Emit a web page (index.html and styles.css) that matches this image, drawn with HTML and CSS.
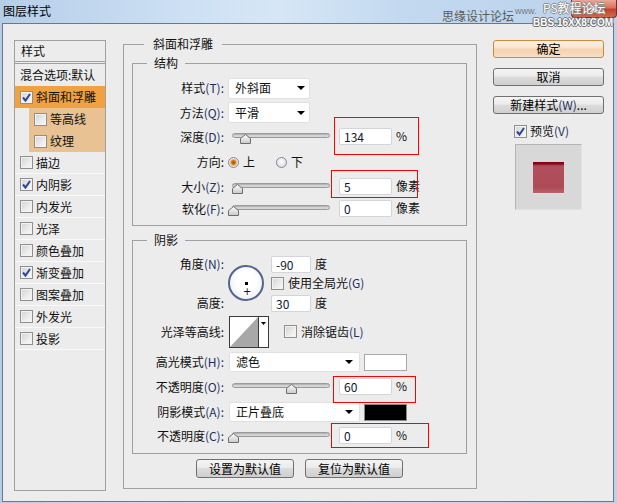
FILE: index.html
```html
<!DOCTYPE html>
<html lang="zh-CN">
<head>
<meta charset="utf-8">
<title>图层样式</title>
<link rel="stylesheet" href="styles.css">
</head>
<body>
<div class="window">
  <div class="titlebar">
    <span class="title">图层样式</span>
    <span class="close"><svg width="12" height="10" viewBox="0 0 12 10"><path d="M2 1 L10 9 M10 1 L2 9" stroke="#fff" stroke-width="2.4"/></svg></span>
  </div>
  <div class="wm wm1">思缘设计论坛</div>
  <div class="wm wm2">www.</div>
  <div class="wm wm3">PS教程论坛</div>
  <div class="wm wm4">BBS.16XX8.COM</div>

  <div class="client">
    <div class="stylelist">
      <div class="li head">样式</div>
      <div class="li plain">混合选项:默认</div>
      <div class="li sel"><span class="cb on"><svg width="11" height="11" viewBox="0 0 11 11"><path d="M2 5.5 L4.5 8.5 L9 2" fill="none" stroke="#2d4596" stroke-width="2"/></svg></span>斜面和浮雕</div>
      <div class="li sub"><span class="cb"></span>等高线</div>
      <div class="li sub"><span class="cb"></span>纹理</div>
      <div class="li"><span class="cb"></span>描边</div>
      <div class="li"><span class="cb on"><svg width="11" height="11" viewBox="0 0 11 11"><path d="M2 5.5 L4.5 8.5 L9 2" fill="none" stroke="#2d4596" stroke-width="2"/></svg></span>内阴影</div>
      <div class="li"><span class="cb"></span>内发光</div>
      <div class="li"><span class="cb"></span>光泽</div>
      <div class="li"><span class="cb"></span>颜色叠加</div>
      <div class="li"><span class="cb on"><svg width="11" height="11" viewBox="0 0 11 11"><path d="M2 5.5 L4.5 8.5 L9 2" fill="none" stroke="#2d4596" stroke-width="2"/></svg></span>渐变叠加</div>
      <div class="li"><span class="cb"></span>图案叠加</div>
      <div class="li"><span class="cb"></span>外发光</div>
      <div class="li"><span class="cb"></span>投影</div>
    </div>

    <div class="group outer">
      <div class="gtitle">斜面和浮雕</div>

      <div class="group inner struct">
        <div class="gtitle">结构</div>
        <div class="row h24"><span class="lbl">样式<span class="k">(T):</span></span><div class="select s1"><span>外斜面</span><i class="arr"></i></div></div>
        <div class="row h25"><span class="lbl">方法<span class="k">(Q):</span></span><div class="select s1"><span>平滑</span><i class="arr"></i></div></div>
        <div class="row h24"><span class="lbl">深度<span class="k">(D):</span></span>
          <div class="slider"><div class="track"></div><div class="thumb" style="left:12px"><svg width="11" height="10" viewBox="0 0 11 10"><defs><linearGradient id="tg1" x1="0" y1="0" x2="0" y2="1"><stop offset="0" stop-color="#ffffff"/><stop offset="1" stop-color="#c8c8c8"/></linearGradient></defs><polygon points="0.5,4.5 5.5,0.5 10.5,4.5 10.5,9.5 0.5,9.5" fill="url(#tg1)" stroke="#6e6e6e"/></svg></div></div>
          <span class="mark"><span class="field">134</span><span class="unit">%</span><span class="redbox m1"></span></span>
        </div>
        <div class="row h26"><span class="lbl">方向:</span><span class="radio on"></span><span class="rtext">上</span><span class="radio r2"></span><span class="rtext">下</span></div>
        <div class="row h24"><span class="lbl">大小<span class="k">(Z):</span></span>
          <div class="slider"><div class="track"></div><div class="thumb" style="left:4px"><svg width="11" height="10" viewBox="0 0 11 10"><polygon points="0.5,4.5 5.5,0.5 10.5,4.5 10.5,9.5 0.5,9.5" fill="url(#tg1)" stroke="#6e6e6e"/></svg></div></div>
          <span class="mark"><span class="field">5</span><span class="unit">像素</span><span class="redbox m2"></span></span>
        </div>
        <div class="row h20"><span class="lbl">软化<span class="k">(F):</span></span>
          <div class="slider"><div class="track"></div><div class="thumb" style="left:0px"><svg width="11" height="10" viewBox="0 0 11 10"><polygon points="0.5,4.5 5.5,0.5 10.5,4.5 10.5,9.5 0.5,9.5" fill="url(#tg1)" stroke="#6e6e6e"/></svg></div></div>
          <span class="mark"><span class="field">0</span><span class="unit">像素</span></span>
        </div>
      </div>

      <div class="group inner shadow">
        <div class="gtitle">阴影</div>
        <div class="angle">
          <div class="alabels"><span class="lbl">角度<span class="k">(N):</span></span><span class="lbl">高度:</span></div>
          <div class="dial"><span class="dot"></span><span class="cursor">+</span></div>
          <div class="acol">
            <div class="arow a1"><span class="field f40">-90</span><span class="unit">度</span></div>
            <div class="arow a2"><span class="cb"></span><span>使用全局光<span class="k">(G)</span></span></div>
            <div class="arow a3"><span class="field f40">30</span><span class="unit">度</span></div>
          </div>
        </div>
        <div class="row h35"><span class="lbl">光泽等高线:</span>
          <div class="contour"><svg width="40" height="32" viewBox="0 0 40 32"><rect x="0.5" y="0.5" width="39" height="31" fill="#fff" stroke="#3a3a3a"/><polygon points="1,31 29,1 29,31" fill="#a8a8a8"/><line x1="29.5" y1="1" x2="29.5" y2="31" stroke="#3a3a3a"/><polygon points="32,6 37,6 34.5,9" fill="#000"/></svg></div>
          <span class="cb c2"></span><span>消除锯齿<span class="k">(L)</span></span>
        </div>
        <div class="row h26"><span class="lbl">高光模式<span class="k">(H):</span></span><div class="select s2"><span>滤色</span><i class="arr"></i></div><span class="color white"></span></div>
        <div class="row h24"><span class="lbl">不透明度<span class="k">(O):</span></span>
          <div class="slider"><div class="track"></div><div class="thumb" style="left:58px"><svg width="11" height="10" viewBox="0 0 11 10"><polygon points="0.5,4.5 5.5,0.5 10.5,4.5 10.5,9.5 0.5,9.5" fill="url(#tg1)" stroke="#6e6e6e"/></svg></div></div>
          <span class="mark"><span class="field">60</span><span class="unit">%</span><span class="redbox m3"></span></span>
        </div>
        <div class="row h26"><span class="lbl">阴影模式<span class="k">(A):</span></span><div class="select s2"><span>正片叠底</span><i class="arr"></i></div><span class="color black"></span></div>
        <div class="row h22"><span class="lbl">不透明度<span class="k">(C):</span></span>
          <div class="slider"><div class="track"></div><div class="thumb" style="left:0px"><svg width="11" height="10" viewBox="0 0 11 10"><polygon points="0.5,4.5 5.5,0.5 10.5,4.5 10.5,9.5 0.5,9.5" fill="url(#tg1)" stroke="#6e6e6e"/></svg></div></div>
          <span class="mark"><span class="field">0</span><span class="unit">%</span><span class="redbox m4"></span></span>
        </div>
      </div>

      <div class="btnrow">
        <button class="btn b2">设置为默认值</button>
        <button class="btn b2">复位为默认值</button>
      </div>
    </div>

    <div class="side">
      <button class="btn default">确定</button>
      <button class="btn">取消</button>
      <button class="btn">新建样式<span class="k">(W)</span>...</button>
      <div class="prevrow"><span class="cb on"><svg width="11" height="11" viewBox="0 0 11 11"><path d="M2 5.5 L4.5 8.5 L9 2" fill="none" stroke="#2d4596" stroke-width="2"/></svg></span>预览<span class="k">(V)</span></div>
      <div class="preview"><div class="redsq"></div></div>
    </div>
  </div>
</div>
</body>
</html>
```

FILE: styles.css
```css
html, body {
  margin: 0;
  padding: 0;
}
body {
  width: 617px;
  height: 503px;
  overflow: hidden;
  font-family: "Noto Sans CJK SC", "Microsoft YaHei", sans-serif;
  font-size: 12px;
  color: #111;
}
.window {
  position: relative;
  width: 617px;
  height: 503px;
  display: flex;
  flex-direction: column;
  background: linear-gradient(90deg, #b5cee8 0%, #cde0f4 30%, #d6e6f6 45%, #c3d9f0 65%, #bad2ec 100%);
}
.titlebar {
  height: 23px;
  flex: none;
  display: flex;
  align-items: flex-start;
}
.title {
  margin: 3px 0 0 3px;
  line-height: 16px;
  font-size: 12px;
  color: #000;
}
.close {
  margin-left: auto;
  width: 46px;
  height: 18px;
  box-sizing: border-box;
  border: 1px solid #7a2c20;
  border-top: 0;
  border-radius: 0 0 4px 4px;
  background: linear-gradient(#e9a797 0%, #d9735f 45%, #c2402a 55%, #d06a50 100%);
  display: flex;
  align-items: center;
  justify-content: center;
}
.wm {
  position: absolute;
  white-space: nowrap;
}
.wm1 { left: 442px; top: 9px; line-height: 14px; color: #5a5a5a; font-size: 12px; }
.wm2 { left: 515px; top: 6px; line-height: 10px; color: #7a7a7a; font-size: 9px; font-family: "Liberation Sans", sans-serif; }
.wm3 { left: 543px; top: 1px; line-height: 14px; color: #fff; font-size: 12px; text-shadow: 1px 0 0 #8a8a8a, -1px 0 0 #8a8a8a, 0 1px 0 #8a8a8a, 0 -1px 0 #8a8a8a; }
.wm4 { left: 533px; top: 17px; line-height: 11px; color: #fff; font-size: 10px; font-family: "Liberation Sans", sans-serif; font-weight: bold; text-shadow: 1px 0 0 #707070, -1px 0 0 #707070, 0 1px 0 #707070, 0 -1px 0 #707070; }

.client {
  flex: 1;
  margin: 0 3px 1px 2px;
  border: 1px solid #6c7887;
  background: #ececec;
  display: flex;
  align-items: flex-start;
  padding: 16px 0 0 11px;
}

/* left style list */
.stylelist {
  width: 92px;
  height: 451px;
  box-sizing: border-box;
  border: 1px solid #a0a0a0;
  flex: none;
}
.li {
  height: 21px;
  border-bottom: 1px solid #f9f9f9;
  display: flex;
  align-items: center;
  padding-left: 5px;
  line-height: 16px;
  white-space: nowrap;
}
.li.head {
  height: 20px;
  border-bottom: 3px double #a0a0a0;
  padding-left: 6px;
}
.li.plain {
  height: 22px;
  border-bottom: 0;
}
.li.sel {
  height: 22px;
  border-bottom: 0;
  background: #f0a142;
}
.li.sub {
  height: 22px;
  border-bottom: 0;
  margin-left: 14px;
  background: #e8c293;
}
.cb {
  width: 13px;
  height: 13px;
  box-sizing: border-box;
  border: 1px solid #8f8f8f;
  background: linear-gradient(135deg, #d2d2d2 0%, #ececec 60%, #fafafa 100%);
  box-shadow: inset 0 0 0 1px #f2f2f2;
  margin-right: 3px;
  flex: none;
  display: flex;
  align-items: center;
  justify-content: center;
}
.cb svg { display: block; }

/* group boxes */
.group {
  border: 1px solid #a0a0a0;
  box-sizing: border-box;
}
.gtitle {
  width: fit-content;
  height: 16px;
  line-height: 16px;
  background: #ececec;
  white-space: nowrap;
}
.outer {
  margin: 4px 0 0 17px;
  width: 354px;
  height: 445px;
  padding: 0 9px 0 8px;
  flex: none;
}
.outer > .gtitle {
  margin: -9px 0 0 12px;
  padding: 0 9px;
}
.inner > .gtitle {
  margin: -9px 0 0 14px;
  padding: 0 7px;
}
.struct {
  margin-top: 11px;
  padding-bottom: 6px;
}
.struct > .gtitle + .row { margin-top: 5px; }
.shadow {
  margin-top: 14px;
  padding-bottom: 6px;
}

.row {
  display: flex;
  align-items: center;
  white-space: nowrap;
}
.h20 { height: 20px; }
.h22 { height: 22px; }
.h24 { height: 24px; }
.h25 { height: 25px; }
.h26 { height: 26px; }
.h35 { height: 35px; }
.lbl {
  width: 91px;
  flex: none;
  text-align: right;
  line-height: 16px;
}
.k { color: #1f2f5f; }

.select {
  height: 21px;
  box-sizing: border-box;
  background: #fff;
  border: 1px solid #e0e0e0;
  border-radius: 2px;
  margin-left: 4px;
  padding: 0 4px 0 6px;
  display: flex;
  align-items: center;
  justify-content: space-between;
  line-height: 16px;
  flex: none;
}
.s1 { width: 82px; }
.s2 { width: 131px; height: 20px; margin-left: 5px; padding-right: 6px; }
.arr {
  width: 0;
  height: 0;
  border-left: 4px solid transparent;
  border-right: 4px solid transparent;
  border-top: 4px solid #000;
}

.slider {
  position: relative;
  width: 104px;
  height: 12px;
  margin: 4px 0 0 4px;
  flex: none;
}
.track {
  position: absolute;
  left: 4px;
  top: 0;
  width: 98px;
  height: 5px;
  box-sizing: border-box;
  border-radius: 3px;
  border: 1px solid #9a9a9a;
  background: linear-gradient(#a9a9a9, #e2e2e2 70%, #c4c4c4);
}
.thumb {
  position: absolute;
  top: 1px;
  width: 11px;
  height: 10px;
}
.thumb svg { display: block; }

.mark {
  position: relative;
  display: flex;
  align-items: flex-start;
  height: 18px;
  margin-left: 7px;
}
.field {
  width: 53px;
  height: 17px;
  box-sizing: border-box;
  border: 1px solid #d2d6dc;
  border-radius: 2px;
  background: #fff;
  padding-left: 4px;
  line-height: 15px;
  color: #101830;
  flex: none;
}
.f40 { width: 40px; }
.unit { margin-left: 4px; line-height: 16px; }
.redbox {
  position: absolute;
  box-sizing: border-box;
  border: 1px solid #ff0000;
  pointer-events: none;
}
.m1 { left: -5px; top: -11px; width: 85px; height: 38px; }
.m2 { left: -8px; top: -8px; width: 87px; height: 28px; }
.m3 { left: -6px; top: -2px; width: 83px; height: 27px; }
.m4 { left: -8px; top: -4px; width: 98px; height: 25px; }

.radio {
  width: 11px;
  height: 11px;
  box-sizing: border-box;
  border-radius: 50%;
  border: 1px solid #7c8796;
  background: radial-gradient(circle at 50% 40%, #ffffff, #d4d4d4);
  margin-left: 4px;
  flex: none;
}
.radio.on {
  background: radial-gradient(circle, #a24a08 0, #d77a1c 2px, #f2b46a 3px, #e8e8e8 4px, #fafafa 5px);
}
.radio.r2 { margin-left: 21px; }
.rtext { margin-left: 4px; line-height: 16px; }

/* angle block */
.angle {
  display: flex;
  height: 60px;
  margin-top: 6px;
}
.alabels {
  display: flex;
  flex-direction: column;
  justify-content: space-between;
  padding: 2px 0 3px;
}
.dial {
  position: relative;
  width: 36px;
  height: 36px;
  box-sizing: border-box;
  margin: 11px 0 0 4px;
  border-radius: 50%;
  border: 2px solid #56648c;
  background: radial-gradient(circle at 50% 45%, #ffffff 40%, #e4e6ee 100%);
  display: flex;
  align-items: center;
  justify-content: center;
  flex: none;
}
.dot {
  width: 3px;
  height: 3px;
  background: #000;
}
.cursor {
  position: absolute;
  left: 13px;
  top: 20px;
  font-size: 10px;
  line-height: 10px;
  font-family: "DejaVu Sans", sans-serif;
  color: #111;
}
.acol {
  margin-left: 7px;
  display: flex;
  flex-direction: column;
}
.arow {
  display: flex;
  align-items: center;
  line-height: 16px;
  white-space: nowrap;
}
.a1 { height: 20px; }
.a2 { height: 18px; }
.a3 { height: 22px; }
.a2 .cb { margin-right: 4px; }

.contour {
  width: 40px;
  height: 32px;
  margin-left: 5px;
  flex: none;
}
.contour svg { display: block; }
.cb.c2 { margin-left: 15px; margin-right: 4px; }

.color {
  margin-left: 4px;
  width: 43px;
  height: 17px;
  box-sizing: border-box;
  flex: none;
}
.color.white { background: #fff; border: 1px solid #a8a8a8; }
.color.black { background: #000; border: 1px solid #8a8a8a; }

/* buttons */
.btn {
  display: block;
  height: 18px;
  width: 111px;
  box-sizing: border-box;
  padding: 0;
  border: 1px solid #707070;
  border-radius: 3px;
  background: linear-gradient(#f4f4f4 0%, #ebebeb 45%, #dcdcdc 50%, #cfcfcf 100%);
  font-family: "Noto Sans CJK SC", "Microsoft YaHei", sans-serif;
  font-size: 12px;
  line-height: 16px;
  color: #000;
  text-align: center;
  white-space: nowrap;
}
.btn.default {
  border-color: #d1883a;
  background: linear-gradient(#fdf2e6 0%, #f9e2cc 45%, #f4d2ae 50%, #f7dfc4 100%);
}
.btnrow {
  display: flex;
  justify-content: center;
  gap: 11px;
  margin-top: 5px;
}
.btn.b2 {
  width: 98px;
  height: 19px;
  line-height: 17px;
}

.side {
  margin-left: 16px;
  width: 111px;
  flex: none;
  display: flex;
  flex-direction: column;
  gap: 10px;
}
.prevrow {
  margin-top: 1px;
  padding-left: 21px;
  display: flex;
  align-items: center;
  height: 12px;
  line-height: 16px;
  white-space: nowrap;
}
.preview {
  margin: -3px 0 0 22px;
  width: 67px;
  height: 66px;
  box-sizing: border-box;
  border: 1px solid #b5b5b5;
  border-right-color: #e2e2e2;
  border-bottom-color: #e2e2e2;
  background: #d8d8d8;
  display: flex;
  align-items: center;
  justify-content: center;
}
.redsq {
  width: 31px;
  height: 31px;
  background: linear-gradient(#7a000e 0, #8c0a1c 2px, #b0505c 4px, #ad4a55 80%, #b8606a 100%);
  box-shadow: 0 1px 0 #f2dada;
}
```
